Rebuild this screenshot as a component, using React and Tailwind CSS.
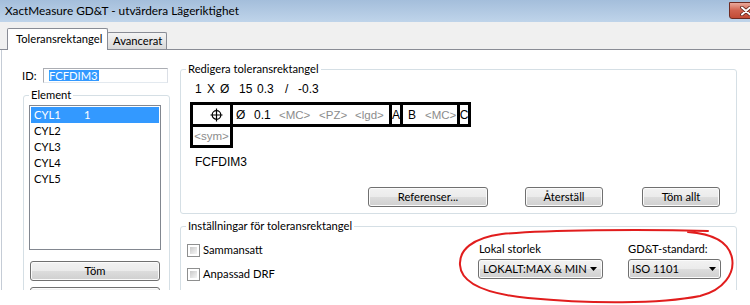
export default function App() {
  const btn =
    "h-[20px] flex items-center justify-center rounded-[3px] border border-[#707070] bg-[linear-gradient(to_bottom,#f2f2f2,#ebebeb_50%,#dddddd_50%,#cfcfcf)] shadow-[inset_0_0_0_1px_#fbfbfb] leading-[14px]";
  const combo =
    "h-[20px] flex items-center justify-between rounded-[3px] border border-[#707070] bg-[linear-gradient(to_bottom,#f2f2f2,#ebebeb_50%,#dddddd_50%,#cfcfcf)] shadow-[inset_0_0_0_1px_#fbfbfb] whitespace-nowrap";
  const fcf = "font-['Liberation_Sans',Arial,sans-serif]";
  const gray = "text-[#8c8c8c] text-[11.5px]";
  const Tri = () => (
    <svg width="7" height="4" viewBox="0 0 7 4" className="shrink-0">
      <path d="M0 0 L7 0 L3.5 4 Z" fill="#000" />
    </svg>
  );
  const Check = () => (
    <div className="w-[13px] h-[13px] border border-[#8e8f8f] bg-white p-[2px]">
      <div className="w-full h-full bg-[linear-gradient(135deg,#c9c9c9,#f6f6f6)]" />
    </div>
  );
  return (
    <div className="relative w-[750px] h-[305px] overflow-hidden bg-white text-black font-['Lato',sans-serif] text-[11.2px] leading-[14px]">
      {/* title bar */}
      <div className="flex h-[22px] overflow-hidden bg-gradient-to-b from-[#a4bedb] to-[#bfd4ea]">
        <div className="flex-1 pl-[5px] pt-[4px] text-[11.8px] leading-[14px] whitespace-nowrap">
          XactMeasure GD&amp;T - utvärdera Lägeriktighet
        </div>
        <div className="mt-[2px] h-[17px] w-[34px] -mr-[13px] shrink-0 rounded-bl-[3px] border border-[#6e2b22] bg-gradient-to-b from-[#e9a99c] via-[#d0614d] to-[#c24b35] flex items-center justify-center">
          <svg width="12" height="10" viewBox="0 0 12 10">
            <path d="M2 1.5 L10 8.5 M10 1.5 L2 8.5" stroke="#5a2018" strokeWidth="3.6" strokeLinecap="round" />
            <path d="M2 1.5 L10 8.5 M10 1.5 L2 8.5" stroke="#ffffff" strokeWidth="2" strokeLinecap="round" />
          </svg>
        </div>
      </div>

      {/* tab strip */}
      <div className="h-[28px] bg-[#f0f0f0] border-b border-[#898c95] flex items-end pl-[7px]">
        <div className="relative z-10 -mb-px h-[22px] w-[101px] border border-b-0 border-[#898c95] bg-white rounded-t-[2px] pl-[8px] pt-[3px] whitespace-nowrap">
          Toleransrektangel
        </div>
        <div className="-ml-px h-[17px] w-[60px] border border-b-0 border-[#898c95] bg-gradient-to-b from-[#f4f4f4] to-[#d9d9d9] rounded-t-[2px] pl-[5px] pt-px whitespace-nowrap">
          Avancerat
        </div>
      </div>

      {/* panel */}
      <div className="h-[240px] overflow-hidden flex ml-px border-l border-[#c5ccd6] pl-[18px] pr-[13px]">
        {/* left column */}
        <div className="w-[150px] shrink-0 flex flex-col">
          <div className="mt-[18px] flex items-center h-[15px]">
            <span className="w-[23px] pl-[2px]">ID:</span>
            <div className="w-[125px] h-[15px] border border-[#abadb3] border-b-[#e3e9ef] border-r-[#dbdfe6] flex items-center pl-[5px]">
              <span className="bg-[#3399ff] text-white leading-[11px] pr-px">FCFDIM3</span>
            </div>
          </div>
          <fieldset className="mt-[5px] ml-[3px] w-[147px] border border-[#d5dfe5] rounded-[3px] p-0 min-h-[300px]">
            <legend className="ml-[5px] px-[2px] leading-[14px]">Element</legend>
            <div className="pl-[5px] pt-[3px] flex flex-col">
              <div className="w-[132px] h-[145px] border border-[#828790] bg-white p-px">
                <div className="h-[16px] flex items-center bg-[#3399ff] text-white pl-[3px]">
                  <span className="w-[50px]">CYL1</span>
                  <span>1</span>
                </div>
                <div className="h-[16px] flex items-center pl-[3px]">CYL2</div>
                <div className="h-[16px] flex items-center pl-[3px]">CYL3</div>
                <div className="h-[16px] flex items-center pl-[3px]">CYL4</div>
                <div className="h-[16px] flex items-center pl-[3px]">CYL5</div>
              </div>
              <div className={`${btn} mt-[11px] ml-px w-[130px]`}>Töm</div>
              <div className={`${btn} mt-[6px] ml-px w-[130px]`}></div>
            </div>
          </fieldset>
        </div>

        {/* right column */}
        <div className="flex-1 ml-[10px] flex flex-col">
          <fieldset className="mt-[12px] border border-[#d5dfe5] rounded-[3px] p-0">
            <legend className="ml-[5px] px-[2px] leading-[14px]">Redigera toleransrektangel</legend>
            <div className="pl-[9px] pr-[16px] pb-[6px] flex flex-col">
              <div className={`${fcf} mt-[6px] h-[14px] flex items-center text-[12px] whitespace-nowrap`}>
                <span className="ml-[5px] w-[12px]">1</span>
                <span className="w-[13px]">X</span>
                <span className="w-[19px]">Ø</span>
                <span className="w-[18px]">15</span>
                <span className="w-[28px]">0.3</span>
                <span className="w-[13px]">/</span>
                <span>-0.3</span>
              </div>
              <div className={`${fcf} mt-[6px] flex flex-col text-[12px] whitespace-nowrap`}>
                <div className="flex w-fit h-[25px] border-[3px] border-black">
                  <div className="w-[37px] flex items-center justify-center pl-[10px]">
                    <svg width="13" height="14" viewBox="0 0 13 14">
                      <circle cx="6.5" cy="7" r="4.3" fill="none" stroke="#000" strokeWidth="1.2" />
                      <path d="M0.5 7 H12.5 M6.5 0.5 V13.5" stroke="#000" strokeWidth="1.2" />
                    </svg>
                  </div>
                  <div className="w-[159px] border-l-[3px] border-black flex items-center">
                    <span className="ml-[3px] w-[18px]">Ø</span>
                    <span className="w-[25px]">0.1</span>
                    <span className={`w-[40px] ${gray}`}>&lt;MC&gt;</span>
                    <span className={`w-[36px] ${gray}`}>&lt;PZ&gt;</span>
                    <span className={gray}>&lt;lgd&gt;</span>
                  </div>
                  <div className="w-[11px] border-l-[3px] border-black flex items-center justify-center">A</div>
                  <div className="w-[57px] border-l-[3px] border-black flex items-center">
                    <span className="ml-[5px] w-[17px]">B</span>
                    <span className={gray}>&lt;MC&gt;</span>
                  </div>
                  <div className="w-[11px] border-l-[3px] border-black flex items-center justify-center">C</div>
                </div>
                <div className="w-[43px] h-[21px] border-[3px] border-t-0 border-black flex items-center justify-center">
                  <span className={gray}>&lt;sym&gt;</span>
                </div>
              </div>
              <div className={`${fcf} mt-[7px] pl-[5px] text-[12px] leading-[14px]`}>FCFDIM3</div>
              <div className="mt-[18px] flex justify-end">
                <div className={`${btn} w-[120px]`}>Referenser...</div>
                <div className={`${btn} w-[78px] ml-[37px]`}>Återställ</div>
                <div className={`${btn} w-[78px] ml-[39px]`}>Töm allt</div>
              </div>
            </div>
          </fieldset>

          <fieldset className="mt-[5px] border border-[#d5dfe5] rounded-[3px] p-0 min-h-[120px]">
            <legend className="ml-[5px] px-[2px] leading-[14px]">Inställningar för toleransrektangel</legend>
            <div className="flex justify-between pl-[6px] pr-[15px]">
              <div className="flex flex-col">
                <div className="mt-[10px] h-[14px] flex items-center gap-[3px]">
                  <Check />
                  <span>Sammansatt</span>
                </div>
                <div className="mt-[10px] h-[14px] flex items-center gap-[3px]">
                  <Check />
                  <span>Anpassad DRF</span>
                </div>
              </div>
              <div className="flex gap-[25px] mt-[9px]">
                <div className="flex flex-col">
                  <div className="h-[14px] pl-px">Lokal storlek</div>
                  <div className={`${combo} mt-[3px] w-[125px] pl-[4px] pr-[5px]`}>
                    <span>LOKALT:MAX &amp; MIN</span>
                    <Tri />
                  </div>
                </div>
                <div className="flex flex-col">
                  <div className="h-[14px]">GD&amp;T-standard:</div>
                  <div className={`${combo} mt-[3px] w-[93px] pl-[3px] pr-[4px]`}>
                    <span>ISO 1101</span>
                    <Tri />
                  </div>
                </div>
              </div>
            </div>
          </fieldset>
        </div>
      </div>

      {/* hand-drawn red annotation */}
      <svg className="absolute inset-0 pointer-events-none" width="750" height="305" viewBox="0 0 750 305">
        <path
          d="M708 231 C640 229, 545 230, 502 234 C472 238, 459 250, 460 265 C461 284, 488 294, 528 298 C590 304, 660 304, 700 296 C724 290, 735 273, 732 258 C729 243, 716 234, 688 232"
          fill="none"
          stroke="#e11d1d"
          strokeWidth="2"
          strokeLinecap="round"
        />
      </svg>
    </div>
  );
}
